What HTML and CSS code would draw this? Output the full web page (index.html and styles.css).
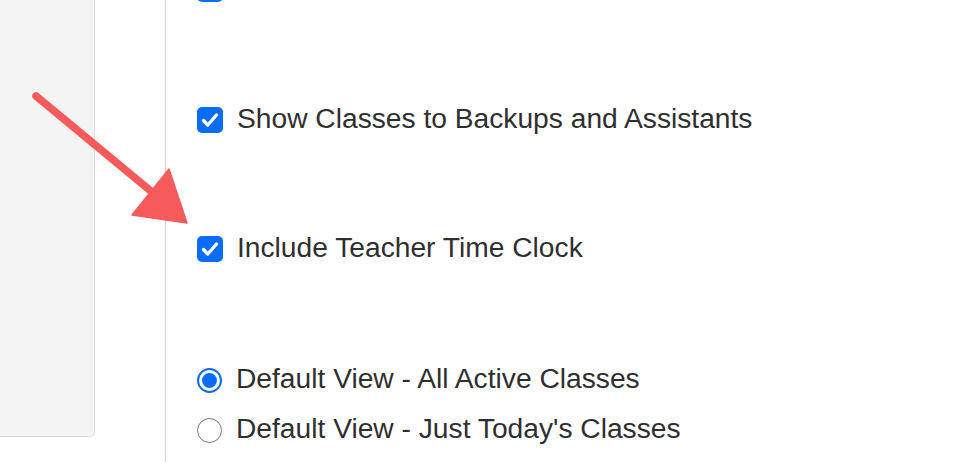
FILE: index.html
```html
<!DOCTYPE html>
<html>
<head>
<meta charset="utf-8">
<link rel="stylesheet" href="styles.css">
</head>
<body>
<div class="page">
  <div class="side"></div>
  <div class="main">
    <div class="row row-top">
      <span class="check"><svg viewBox="0 0 26 26" width="26" height="26"><rect x="0" y="0" width="26" height="26" rx="5" fill="#0b6df6"/><path d="M6.5 13.5 L10.8 18 L19.5 8" fill="none" stroke="#fff" stroke-width="3.4" stroke-linecap="round" stroke-linejoin="round"/></svg></span>
      <span class="label">&nbsp;</span>
    </div>
    <div class="row row-a">
      <span class="check"><svg viewBox="0 0 26 26" width="26" height="26"><rect x="0" y="0" width="26" height="26" rx="5" fill="#0b6df6"/><path d="M6.5 13.5 L10.8 18 L19.5 8" fill="none" stroke="#fff" stroke-width="3.4" stroke-linecap="round" stroke-linejoin="round"/></svg></span>
      <span class="label">Show Classes to Backups and Assistants</span>
    </div>
    <div class="row row-b">
      <span class="check"><svg viewBox="0 0 26 26" width="26" height="26"><rect x="0" y="0" width="26" height="26" rx="5" fill="#0b6df6"/><path d="M6.5 13.5 L10.8 18 L19.5 8" fill="none" stroke="#fff" stroke-width="3.4" stroke-linecap="round" stroke-linejoin="round"/></svg></span>
      <span class="label">Include Teacher Time Clock</span>
    </div>
    <div class="row row-c">
      <span class="radio on"><span class="dot"></span></span>
      <span class="label">Default View - All Active Classes</span>
    </div>
    <div class="row row-d">
      <span class="radio"></span>
      <span class="label">Default View - Just Today's Classes</span>
    </div>
  </div>
  <svg class="arrow" width="970" height="462" viewBox="0 0 970 462">
    <line x1="36" y1="96" x2="152" y2="192" stroke="#f65a5b" stroke-width="7.5" stroke-linecap="round"/>
    <polygon points="169,169 132,215 187,223" fill="#f65a5b" stroke="#f65a5b" stroke-width="1.5" stroke-linejoin="round"/>
  </svg>
</div>
</body>
</html>
```
FILE: styles.css
```css
html, body {
  margin: 0;
  padding: 0;
  background: #ffffff;
}
.page {
  position: relative;
  width: 970px;
  height: 462px;
  overflow: hidden;
  display: flex;
  align-items: flex-start;
  font-family: "Liberation Sans", Arial, Helvetica, sans-serif;
}
.side {
  width: 94px;
  height: 436px;
  background: #f4f4f4;
  border-right: 1px solid #dcdcdc;
  border-bottom: 1px solid #dcdcdc;
  border-bottom-right-radius: 5px;
  flex: none;
}
.main {
  margin-left: 70px;
  border-left: 1.5px solid #d2d2d2;
  height: 462px;
  padding-left: 31px;
  display: flex;
  flex-direction: column;
  flex: 1;
}
.row {
  display: flex;
  align-items: center;
  height: 26px;
  flex: none;
}
.row-top { margin-top: -24px; }
.row-a { margin-top: 105px; }
.row-b { margin-top: 103px; }
.row-c { margin-top: 105px; }
.row-d { margin-top: 24px; }
.check {
  width: 26px;
  height: 26px;
  display: block;
  flex: none;
}
.check svg { display: block; }
.label {
  margin-left: 14px;
  font-size: 28.2px;
  color: #2f2f2f;
  white-space: nowrap;
  line-height: 26px;
  padding-bottom: 4px;
}
.radio {
  width: 23px;
  height: 23px;
  border: 1.5px solid #777777;
  border-radius: 50%;
  box-sizing: content-box;
  display: flex;
  align-items: center;
  justify-content: center;
  flex: none;
  background: #fff;
}
.radio.on {
  width: 21px;
  height: 21px;
  border: 2.5px solid #0b6df6;
}
.dot {
  width: 15px;
  height: 15px;
  border-radius: 50%;
  background: #0b6df6;
}
.arrow {
  position: absolute;
  left: 0;
  top: 0;
  pointer-events: none;
}
```
